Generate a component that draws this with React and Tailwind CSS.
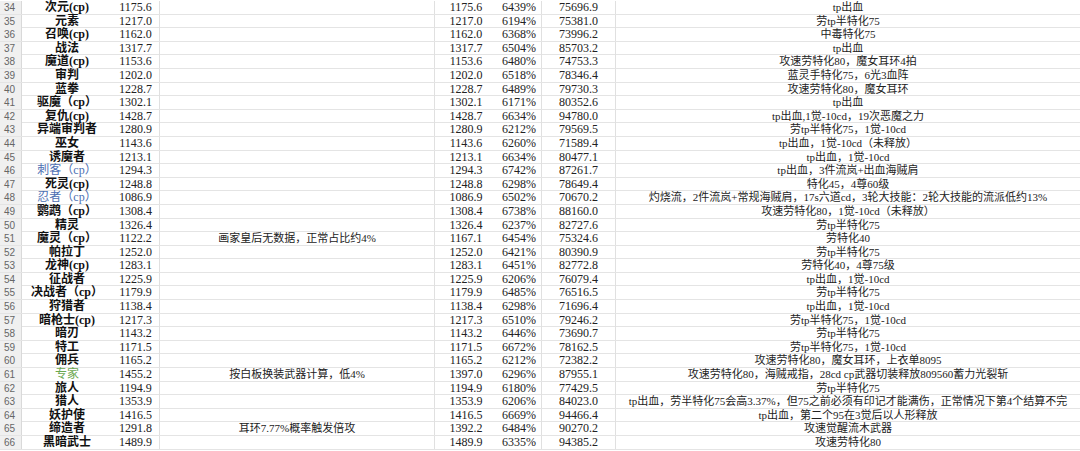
const rows = [
  [34, '次元(cp)', '1175.6', '', '1175.6', '6439%', '75696.9', 'tp出血'],
  [35, '元素', '1217.0', '', '1217.0', '6194%', '75381.0', '劳tp半特化75'],
  [36, '召唤(cp)', '1162.0', '', '1162.0', '6368%', '73996.2', '中毒特化75'],
  [37, '战法', '1317.7', '', '1317.7', '6504%', '85703.2', 'tp出血'],
  [38, '魔道(cp)', '1153.6', '', '1153.6', '6480%', '74753.3', '攻速劳特化80，魔女耳环4拍'],
  [39, '审判', '1202.0', '', '1202.0', '6518%', '78346.4', '蓝灵手特化75，6光3血阵'],
  [40, '蓝拳', '1228.7', '', '1228.7', '6489%', '79730.3', '攻速劳特化80，魔女耳环'],
  [41, '驱魔（cp）', '1302.1', '', '1302.1', '6171%', '80352.6', 'tp出血'],
  [42, '复仇(cp)', '1428.7', '', '1428.7', '6634%', '94780.0', 'tp出血,1觉-10cd，19次恶魔之力'],
  [43, '异端审判者', '1280.9', '', '1280.9', '6212%', '79569.5', '劳tp半特化75，1觉-10cd'],
  [44, '巫女', '1143.6', '', '1143.6', '6260%', '71589.4', 'tp出血，1觉-10cd（未释放）'],
  [45, '诱魔者', '1213.1', '', '1213.1', '6634%', '80477.1', 'tp出血，1觉-10cd'],
  [46, '刺客（cp）', '1294.3', '', '1294.3', '6742%', '87261.7', 'tp出血，3件流岚+出血海贼肩', 'blue'],
  [47, '死灵(cp)', '1248.8', '', '1248.8', '6298%', '78649.4', '特化45，4尊60级'],
  [48, '忍者（cp）', '1086.9', '', '1086.9', '6502%', '70670.2', '灼烧流，2件流岚+常规海贼肩，17s六道cd，3轮大技能：2轮大技能的流派低约13%', 'blue'],
  [49, '鹦鹉（cp）', '1308.4', '', '1308.4', '6738%', '88160.0', '攻速劳特化80，1觉-10cd（未释放）'],
  [50, '精灵', '1326.4', '', '1326.4', '6237%', '82727.6', '劳tp半特化75'],
  [51, '魔灵（cp）', '1122.2', '画家皇后无数据，正常占比约4%', '1167.1', '6454%', '75324.6', '劳特化40'],
  [52, '帕拉丁', '1252.0', '', '1252.0', '6421%', '80390.9', '劳tp半特化75'],
  [53, '龙神(cp)', '1283.1', '', '1283.1', '6451%', '82772.8', '劳特化40，4尊75级'],
  [54, '征战者', '1225.9', '', '1225.9', '6206%', '76079.4', 'tp出血，1觉-10cd'],
  [55, '决战者（cp）', '1179.9', '', '1179.9', '6485%', '76516.5', '劳tp半特化75'],
  [56, '狩猎者', '1138.4', '', '1138.4', '6298%', '71696.4', 'tp出血，1觉-10cd'],
  [57, '暗枪士(cp)', '1217.3', '', '1217.3', '6510%', '79246.2', '劳tp半特化75，1觉-10cd'],
  [58, '暗刃', '1143.2', '', '1143.2', '6446%', '73690.7', '劳tp半特化75'],
  [59, '特工', '1171.5', '', '1171.5', '6672%', '78162.5', '劳tp半特化75，1觉-10cd'],
  [60, '佣兵', '1165.2', '', '1165.2', '6212%', '72382.2', '攻速劳特化80，魔女耳环，上衣单8095'],
  [61, '专家', '1455.2', '按白板换装武器计算，低4%', '1397.0', '6296%', '87955.1', '攻速劳特化80，海贼戒指，28cd cp武器切装释放809560蓄力光裂斩', 'green'],
  [62, '旅人', '1194.9', '', '1194.9', '6180%', '77429.5', '劳tp半特化75'],
  [63, '猎人', '1353.9', '', '1353.9', '6206%', '84023.0', 'tp出血，劳半特化75会高3.37%，但75之前必须有印记才能满伤，正常情况下第4个结算不完'],
  [64, '妖护使', '1416.5', '', '1416.5', '6669%', '94466.4', 'tp出血，第二个95在3觉后以人形释放'],
  [65, '缔造者', '1291.8', '耳环7.77%概率触发倍攻', '1392.2', '6484%', '90270.2', '攻速觉醒流木武器'],
  [66, '黑暗武士', '1489.9', '', '1489.9', '6335%', '94385.2', '攻速劳特化80'],
];

const nameColor = {
  blue: 'text-[#4d6fb3] font-normal',
  green: 'text-[#6aa84f] font-normal',
};

export default function App() {
  return (
    <div className="w-[1080px] h-[451px] overflow-hidden bg-white pt-px font-['Liberation_Serif','Noto_Sans_CJK_SC',serif] text-[11px] text-[#222]">
      {rows.map(([n, name, a, note, b, pct, total, remark, tone]) => (
        <div
          key={n}
          className="grid grid-cols-[22px_90px_48px_275px_62px_45px_74px_1fr] h-[13.6px] leading-[13px] border-b border-[#e4e4e4] whitespace-nowrap"
        >
          <div className="bg-[#f0f0f0] border-r border-[#d9d9d9] pl-[4px] text-[10px] text-[#666] font-['Liberation_Sans',sans-serif]">
            {n}
          </div>
          <div className={`text-center text-[12px] ${tone ? nameColor[tone] : 'font-semibold text-[#111]'}`}>{name}</div>
          <div className="text-center text-[12px] border-r border-[#e0e0e0]">{a}</div>
          <div className="text-center border-r border-[#e0e0e0]">{note}</div>
          <div className="text-center text-[12px]">{b}</div>
          <div className="text-center text-[12px] border-r border-[#e0e0e0]">{pct}</div>
          <div className="text-center text-[12px] border-r border-[#e0e0e0]">{total}</div>
          <div className="text-center">{remark}</div>
        </div>
      ))}
    </div>
  );
}
